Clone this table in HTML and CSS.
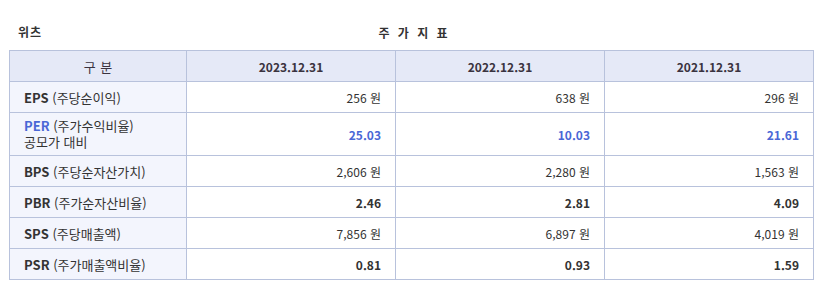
FILE: index.html
```html
<!DOCTYPE html>
<html lang="ko">
<head>
<meta charset="utf-8">
<link rel="stylesheet" href="styles.css">
</head>
<body>
<div class="wrap">
  <div class="titlebar">
    <span class="company">위츠</span>
    <span class="title">주 가 지 표</span>
  </div>
  <table class="grid">
    <colgroup>
      <col class="c-label"><col class="c-val"><col class="c-val"><col class="c-val">
    </colgroup>
    <thead>
      <tr><th class="kh">구 분</th><th>2023.12.31</th><th>2022.12.31</th><th>2021.12.31</th></tr>
    </thead>
    <tbody>
      <tr><td class="lbl"><b>EPS</b> (주당순이익)</td><td>256 원</td><td>638 원</td><td>296 원</td></tr>
      <tr class="per"><td class="lbl"><span class="ln"><b class="blue">PER</b> (주가수익비율)</span><span class="ln">공모가 대비</span></td><td class="bv">25.03</td><td class="bv">10.03</td><td class="bv">21.61</td></tr>
      <tr><td class="lbl"><b>BPS</b> (주당순자산가치)</td><td>2,606 원</td><td>2,280 원</td><td>1,563 원</td></tr>
      <tr><td class="lbl"><b>PBR</b> (주가순자산비율)</td><td class="b">2.46</td><td class="b">2.81</td><td class="b">4.09</td></tr>
      <tr><td class="lbl"><b>SPS</b> (주당매출액)</td><td>7,856 원</td><td>6,897 원</td><td>4,019 원</td></tr>
      <tr><td class="lbl"><b>PSR</b> (주가매출액비율)</td><td class="b">0.81</td><td class="b">0.93</td><td class="b">1.59</td></tr>
    </tbody>
  </table>
</div>
</body>
</html>
```

FILE: styles.css
```css
* { box-sizing: border-box; }
html, body { margin: 0; padding: 0; background: #fff; }
body {
  font-family: "Noto Sans CJK KR", "Noto Sans", sans-serif;
  font-size: 12px;
  color: #333;
}
.wrap { padding: 0 13px 0 9px; width: 827px; }
.titlebar {
  position: relative;
  height: 50px;
  display: flex;
  align-items: center;
  padding-top: 12px;
}
.company {
  margin-left: 9px;
  font-weight: bold;
  color: #333;
  letter-spacing: 1px;
}
.title {
  position: absolute;
  left: 0; right: 0;
  top: 24px;
  text-align: center;
  font-weight: bold;
  color: #333;
  pointer-events: none;
  padding-left: 4px;
  word-spacing: 3px;
  letter-spacing: 1px;
}
.grid {
  border-collapse: collapse;
  width: 805px;
  table-layout: fixed;
}
.c-label { width: 177px; }
.c-val { width: 209px; }
.grid th, .grid td {
  border: 1px solid #b8c2dc;
  height: 31px;
  padding: 0 14px 0 14px;
  line-height: 15px;
}
.grid th {
  background: #e5e9f7;
  font-weight: bold;
  color: #3a3340;
  text-align: center;
}
.grid th.kh { font-weight: normal; font-size: 13px; word-spacing: 1px; }
.grid td { text-align: right; color: #333; }
.grid td.lbl {
  text-align: left;
  background: #f3f5fd;
  padding-left: 14px;
  font-size: 13px;
}
.grid td.lbl .ln { display: block; line-height: 16px; }
.grid td.lbl b { color: #333; }
.grid td.lbl b.blue { color: #4a67d6; }
.grid tr.per td { height: 43px; }
.grid td.b { font-weight: bold; }
.grid td.bv { font-weight: bold; color: #4a67d6; }
```
